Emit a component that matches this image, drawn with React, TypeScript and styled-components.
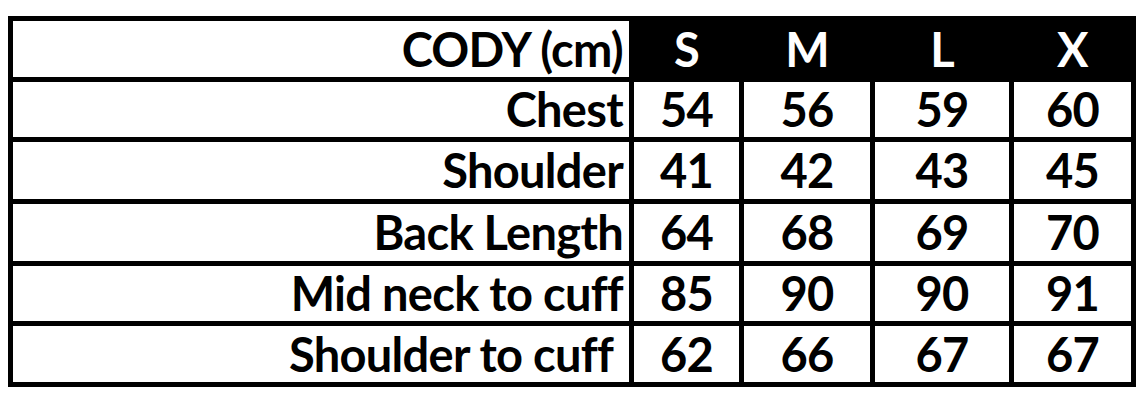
import styled, { createGlobalStyle } from "styled-components";

const GlobalStyle = createGlobalStyle`
  body {
    margin: 16px 8px 8px;
    background: #ffffff;
    font-family: "Lato", "Liberation Sans", sans-serif;
  }
`;

const sizes = ["S", "M", "L", "X"];

const rows: { label: string; values: number[] }[] = [
  { label: "Chest", values: [54, 56, 59, 60] },
  { label: "Shoulder", values: [41, 42, 43, 45] },
  { label: "Back Length", values: [64, 68, 69, 70] },
  { label: "Mid neck to cuff", values: [85, 90, 90, 91] },
  { label: "Shoulder to cuff\u00a0", values: [62, 66, 67, 67] },
];

export default function App() {
  return (
    <>
      <GlobalStyle />
      <Chart>
        <Label>CODY (cm)</Label>
        {sizes.map((s) => (
          <SizeHead key={s}>{s}</SizeHead>
        ))}
        {rows.map((row) => (
          <Row key={row.label} label={row.label} values={row.values} />
        ))}
      </Chart>
    </>
  );
}

function Row({ label, values }: { label: string; values: number[] }) {
  return (
    <>
      <Label>{label}</Label>
      {values.map((v, i) => (
        <Value key={i}>{v}</Value>
      ))}
    </>
  );
}

// black background + gaps draw the 5px grid lines
const Chart = styled.div`
  display: grid;
  grid-template-columns: 616px 105px 126px 134px 117px;
  grid-template-rows: 56px 55px 57px 57px 55px 56px;
  gap: 5px;
  padding: 5px;
  width: max-content;
  background: #000000;
`;

const Cell = styled.div`
  display: flex;
  align-items: center;
  font-size: 47px;
  font-weight: 700;
  letter-spacing: -0.7px;
  line-height: 1;
  color: #000000;
  background: #ffffff;
  white-space: pre;
`;

const Label = styled(Cell)`
  justify-content: flex-end;
  padding-right: 6px;
`;

const Value = styled(Cell)`
  justify-content: center;
`;

const SizeHead = styled(Value)`
  background: #000000;
  color: #ffffff;
`;
